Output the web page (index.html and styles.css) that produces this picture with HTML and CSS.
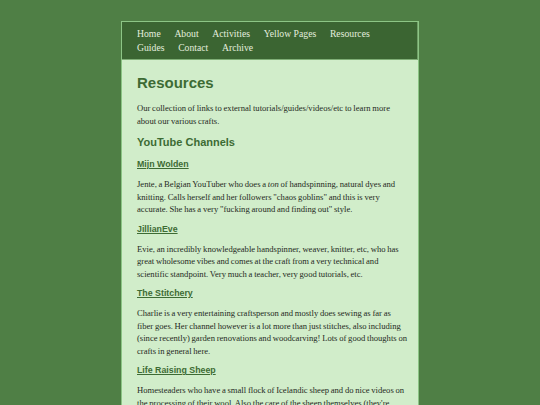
FILE: index.html
```html
<!DOCTYPE html>
<html lang="en">
<head>
<meta charset="utf-8">
<title>Resources</title>
<link rel="stylesheet" href="styles.css">
</head>
<body>
<div class="page">
  <header class="site-header">
    <nav class="nav">
      <a href="#">Home</a>
      <a href="#">About</a>
      <a href="#">Activities</a>
      <a href="#">Yellow Pages</a>
      <a href="#">Resources</a>
      <a href="#">Guides</a>
      <a href="#">Contact</a>
      <a href="#">Archive</a>
    </nav>
  </header>
  <main class="content">
    <h1>Resources</h1>
    <p class="intro">Our collection of links to external tutorials/guides/videos/etc to learn more about our various crafts.</p>
    <h2>YouTube Channels</h2>
    <h3><a href="#">Mijn Wolden</a></h3>
    <p>Jente, a Belgian YouTuber who does a <em>ton</em> of handspinning, natural dyes and knitting. Calls herself and her followers "chaos goblins" and this is very accurate. She has a very "fucking around and finding out" style.</p>
    <h3><a href="#">JillianEve</a></h3>
    <p>Evie, an incredibly knowledgeable handspinner, weaver, knitter, etc, who has great wholesome vibes and comes at the craft from a very technical and scientific standpoint. Very much a teacher, very good tutorials, etc.</p>
    <h3><a href="#">The Stitchery</a></h3>
    <p>Charlie is a very entertaining craftsperson and mostly does sewing as far as fiber goes. Her channel however is a lot more than just stitches, also including (since recently) garden renovations and woodcarving! Lots of good thoughts on crafts in general here.</p>
    <h3><a href="#">Life Raising Sheep</a></h3>
    <p>Homesteaders who have a small flock of Icelandic sheep and do nice videos on the processing of their wool. Also the care of the sheep themselves (they're adorable) and lots of other homestead things.</p>
  </main>
</div>
</body>
</html>
```

FILE: styles.css
```css
html, body {
  margin: 0;
  padding: 0;
}
body {
  background: #4f7f45;
  font-family: "Liberation Serif", "Times New Roman", serif;
  color: #252a23;
}
.page {
  width: 296px;
  margin: 21px auto 0;
  border: 1px solid #8cc585;
  border-bottom: none;
  background: #d1edca;
}
.site-header {
  background: #3b6532;
  border-bottom: 1px solid #7fae76;
  border-right: 1px solid #6f9f66;
  padding: 4.6px 14px 3.4px 15px;
}
.nav {
  display: flex;
  flex-wrap: wrap;
  column-gap: 13.7px;
  font-size: 9.7px;
  line-height: 14.3px;
}
.nav a {
  color: #e3eedf;
  text-decoration: none;
}
.content {
  padding: 14px 10.8px 20px 15px;
}
h1, h2, h3 {
  font-family: "Liberation Sans", Arial, sans-serif;
  font-weight: bold;
  color: #3d6b34;
  margin: 0;
}
h1 {
  font-size: 15px;
  line-height: 18px;
  margin-bottom: 10.3px;
}
h2 {
  font-size: 11px;
  line-height: 13px;
  margin-top: 2.5px;
  margin-bottom: 10.4px;
}
h3 {
  font-size: 8.8px;
  line-height: 11px;
  margin-bottom: 8px;
}
h3 a {
  color: #3d6b34;
  text-decoration: underline;
}
p {
  font-size: 8.6px;
  word-spacing: -0.4px;
  line-height: 12.5px;
  margin: 0 0 8px;
}
.intro {
  line-height: 13px;
}
```
